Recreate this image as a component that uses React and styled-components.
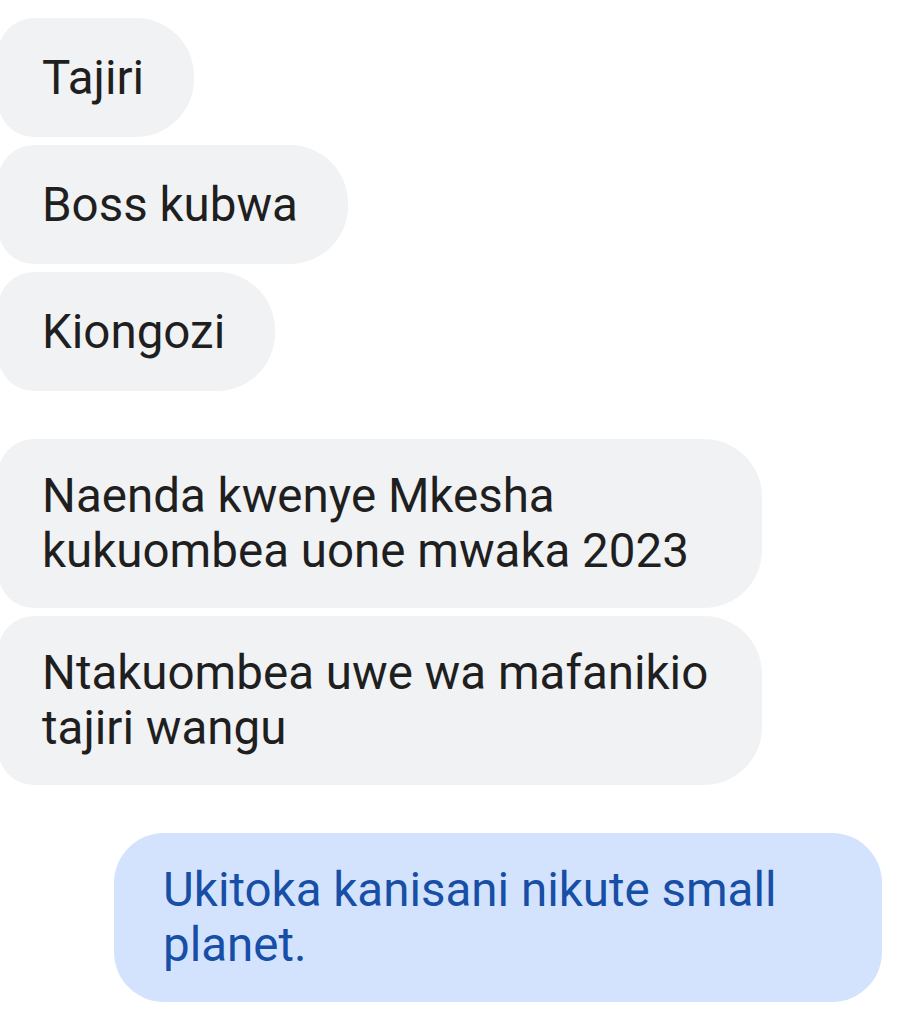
import React from "react";
import styled, { createGlobalStyle } from "styled-components";

const groups = [
  {
    out: false,
    messages: ["Tajiri", "Boss kubwa", "Kiongozi"],
  },
  {
    out: false,
    messages: [
      "Naenda kwenye Mkesha\nkukuombea uone mwaka 2023",
      "Ntakuombea uwe wa mafanikio\ntajiri wangu",
    ],
  },
  {
    out: true,
    messages: ["Ukitoka kanisani nikute small\nplanet."],
  },
];

const App = () => {
  return (
    <>
      <GlobalStyle />
      <Thread>
        {groups.map((group, i) => (
          <Group key={i} $out={group.out}>
            {group.messages.map((text, j) => (
              <Bubble key={j} $out={group.out} $wrapped={text.includes("\n")}>
                {text}
              </Bubble>
            ))}
          </Group>
        ))}
      </Thread>
    </>
  );
};

export default App;

/* ================= styled-components ================= */

const GlobalStyle = createGlobalStyle`
  html, body {
    margin: 0;
    padding: 0;
    background: #ffffff;
  }
  body {
    font-family: Roboto, "Noto Sans", "Liberation Sans", sans-serif;
    overflow: hidden;
  }
`;

const Thread = styled.div`
  width: 905px;
  height: 1012px;
  padding-top: 18px;
  box-sizing: border-box;
  display: flex;
  flex-direction: column;
  gap: 48px;
  overflow: hidden;
`;

const Group = styled.div`
  display: flex;
  flex-direction: column;
  gap: 8px;
  align-items: ${({ $out }) => ($out ? "flex-end" : "flex-start")};
  padding-right: ${({ $out }) => ($out ? "23px" : "0")};
`;

const Bubble = styled.div`
  box-sizing: border-box;
  min-height: 119px;
  width: ${({ $wrapped, $out }) => ($wrapped ? ($out ? "768px" : "764px") : "auto")};
  display: flex;
  align-items: center;
  white-space: pre-line;
  font-size: 47.5px;
  line-height: 55px;
  background: ${({ $out }) => ($out ? "#d3e3fd" : "#f1f2f4")};
  color: ${({ $out }) => ($out ? "#174ea6" : "#1f1f1f")};
  padding: ${({ $out }) => ($out ? "30px 40px 29px 49px" : "30px 50px 29px 44px")};
  margin-left: ${({ $out }) => ($out ? "0" : "-2px")};
  border-radius: ${({ $out }) => ($out ? "50px" : "36px 58px 58px 36px")};
`;
